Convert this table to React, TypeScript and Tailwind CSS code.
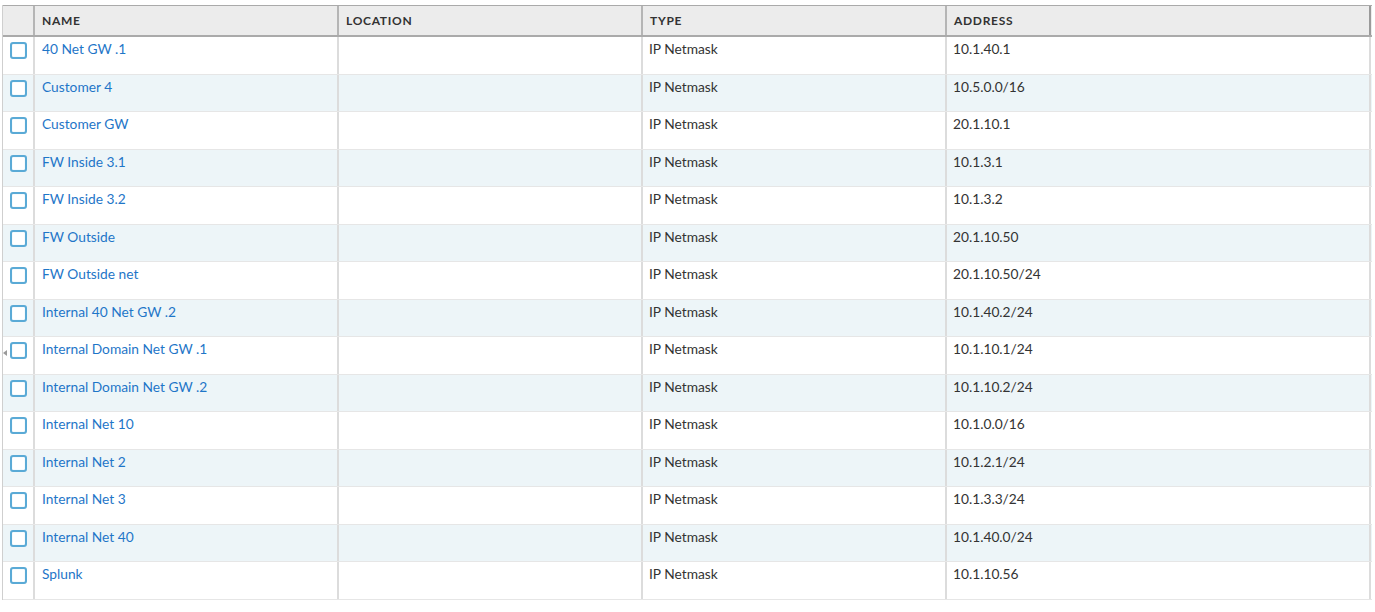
import React from "react";

const rows: [string, string][] = [
  ["40 Net GW .1", "10.1.40.1"],
  ["Customer 4", "10.5.0.0/16"],
  ["Customer GW", "20.1.10.1"],
  ["FW Inside 3.1", "10.1.3.1"],
  ["FW Inside 3.2", "10.1.3.2"],
  ["FW Outside", "20.1.10.50"],
  ["FW Outside net", "20.1.10.50/24"],
  ["Internal 40 Net GW .2", "10.1.40.2/24"],
  ["Internal Domain Net GW .1", "10.1.10.1/24"],
  ["Internal Domain Net GW .2", "10.1.10.2/24"],
  ["Internal Net 10", "10.1.0.0/16"],
  ["Internal Net 2", "10.1.2.1/24"],
  ["Internal Net 3", "10.1.3.3/24"],
  ["Internal Net 40", "10.1.40.0/24"],
  ["Splunk", "10.1.10.56"],
];

const cols = "grid grid-cols-[32px_304px_304px_304px_424px]";

export default function App() {
  return (
    <div
      className="relative w-[1375px] h-[612px] bg-white overflow-hidden pt-[5px] pl-[2px]"
      style={{ fontFamily: "Lato, 'Open Sans', 'Liberation Sans', sans-serif" }}
    >
      <div className="w-[1370px] border-l border-[#cfcfcf]">
        <div className={`${cols} h-[32px] bg-[#ececec] border-t border-b-2 border-[#aaaaaa]`}>
          <div className="border-r-2 border-[#b5b5b5]" />
          {["NAME", "LOCATION", "TYPE", "ADDRESS"].map((h, i) => (
            <div
              key={h}
              className={`flex items-center pl-[7px] pt-[1px] text-[12px] font-bold tracking-[0.7px] text-[#333] ${i < 3 ? "border-r-2 border-[#b5b5b5]" : "border-r-2 border-[#9a9a9a]"}`}
            >
              {h}
            </div>
          ))}
        </div>
        {rows.map(([name, addr], i) => (
          <div
            key={name}
            className={`${cols} h-[37.5px] border-b border-[#e6e6e6] text-[13.75px] ${i % 2 === 1 ? "bg-[#edf5f8]" : "bg-white"}`}
          >
            <div className="border-r-2 border-[#dcdcdc] pl-[7px] pt-[5px]">
              <div className="w-[17px] h-[17px] rounded-[3px] border-2 border-[#5aaad6] bg-white shadow-[inset_0_0_1px_#9fd0ea]" />
            </div>
            <div className="border-r-2 border-[#dcdcdc] pl-[7px] pt-[3px] text-[#1f76c8] leading-[18px]">{name}</div>
            <div className="border-r-2 border-[#dcdcdc]" />
            <div className="border-r-2 border-[#dcdcdc] pl-[6px] pt-[3px] text-[#333] leading-[18px]">IP Netmask</div>
            <div className="border-r-2 border-[#dcdcdc] pl-[6px] pt-[3px] text-[#333] leading-[18px]">{addr}</div>
          </div>
        ))}
      </div>
      <div className="absolute left-[3px] top-[350px] w-0 h-0 border-y-[3px] border-y-transparent border-r-[4px] border-r-[#9a9a9a]" />
    </div>
  );
}
